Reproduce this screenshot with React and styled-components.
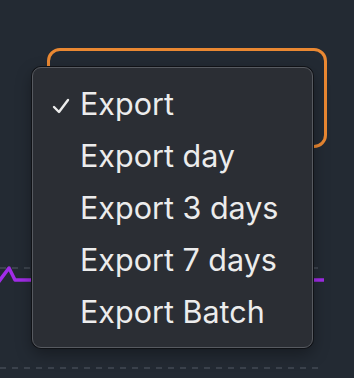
import styled, { createGlobalStyle } from "styled-components";

const Global = createGlobalStyle`
html, body {
  margin: 0;
  padding: 0;
  background: #232a33;
  font-family: Inter, "Noto Sans", sans-serif;
}
`

const items = ["Export", "Export day", "Export 3 days", "Export 7 days", "Export Batch"]

export default function App() {
    return (
        <Page>
            <Global />
            <Toolbar>
                <ExportButton />
            </Toolbar>
            <Chart width="354" height="230" viewBox="0 0 354 230">
                <line x1="0" y1="120" x2="324" y2="120" stroke="#3b424c" strokeWidth="2" strokeDasharray="6 6" />
                <line x1="0" y1="220" x2="324" y2="220" stroke="#3b424c" strokeWidth="2" strokeDasharray="6 6" />
                <polyline points="-3,136 9,120 15,132 324,132" fill="none" stroke="#a12ce8" strokeWidth="3.5" strokeLinejoin="round" />
            </Chart>
            <Menu>
                {items.map((item, i) => (
                    <MenuItem key={item}>
                        <Check>
                            {i === 0 && (
                                <svg width="18" height="16" viewBox="0 0 18 16">
                                    <path d="M2 9 L7 14 L16 2" fill="none" stroke="#ececec" strokeWidth="2.4" strokeLinecap="round" strokeLinejoin="round" />
                                </svg>
                            )}
                        </Check>
                        {item}
                    </MenuItem>
                ))}
            </Menu>
        </Page>
    )
}

const Page = styled.div`
position: relative;
width: 354px;
height: 378px;
overflow: hidden;
`
const Toolbar = styled.div`
display: flex;
padding: 48px 0 0 47px;
`
const ExportButton = styled.div`
box-sizing: border-box;
width: 280px;
height: 100px;
border: 3px solid #ea8832;
border-radius: 13px;
`
const Chart = styled.svg`
display: block;
`
const Menu = styled.div`
position: absolute;
left: 32px;
top: 67px;
box-sizing: border-box;
width: 281px;
height: 281px;
padding: 10px 0;
background: #2b2e34;
border: 1px solid #575a60;
border-radius: 9px;
box-shadow: 0 0 0 1px #101216, 0 6px 16px rgba(0,0,0,0.35);
display: flex;
flex-direction: column;
`
const MenuItem = styled.div`
display: flex;
align-items: center;
height: 52px;
font-size: 30.5px;
color: #ececec;
`
const Check = styled.span`
display: flex;
align-items: center;
width: 47px;
padding: 4px 0 0 19px;
box-sizing: border-box;
`
